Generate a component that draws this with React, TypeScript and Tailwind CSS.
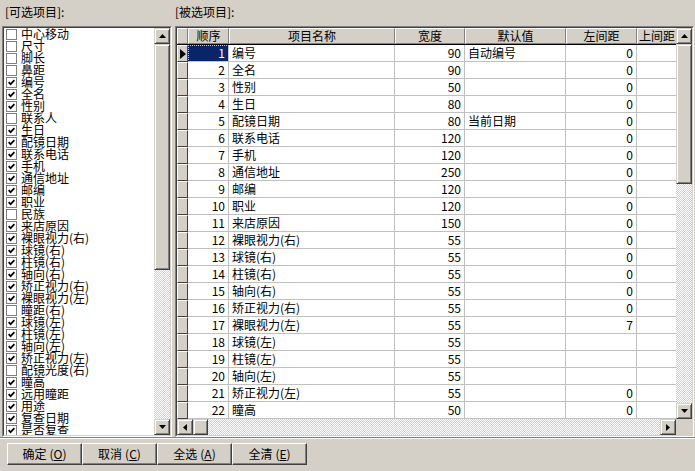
import React from 'react';

const FONT = "font-['Noto_Sans_CJK_SC','Noto_Sans_CJK_JP',sans-serif]";

// classic 3D styles
const raised =
    'bg-[#d4d0c8] border border-t-[#d4d0c8] border-l-[#d4d0c8] border-r-[#404040] border-b-[#404040] shadow-[inset_1px_1px_0_#ffffff,inset_-1px_-1px_0_#808080]';
const track =
    'bg-[repeating-conic-gradient(#d4d0c8_0%_25%,#ffffff_0%_50%)] bg-[length:2px_2px]';

type Dir = 'up' | 'down' | 'left' | 'right';

const Arrow: React.FC<{ dir: Dir }> = ({ dir }) => {
    const vertical = dir === 'up' || dir === 'down';
    const pts = {
        up: '3.5,0 7,4 0,4',
        down: '0,0 7,0 3.5,4',
        left: '4,0 4,7 0,3.5',
        right: '0,0 4,3.5 0,7',
    }[dir];
    return (
        <svg
            width={vertical ? 7 : 4}
            height={vertical ? 4 : 7}
            viewBox={vertical ? '0 0 7 4' : '0 0 4 7'}
        >
            <polygon points={pts} fill="#000" />
        </svg>
    );
};

const ScrollBtn: React.FC<{ dir: Dir }> = ({ dir }) => (
    <div className={`${raised} w-[16px] h-[16px] shrink-0 flex items-center justify-center`}>
        <Arrow dir={dir} />
    </div>
);

const VScroll: React.FC<{ thumb: string }> = ({ thumb }) => (
    <div className="w-[16px] shrink-0 flex flex-col">
        <ScrollBtn dir="up" />
        <div className={`flex-1 flex flex-col ${track}`}>
            <div className={`${raised} w-[16px] ${thumb}`} />
        </div>
        <ScrollBtn dir="down" />
    </div>
);

const HScroll: React.FC = () => (
    <div className="flex-1 h-[16px] flex">
        <ScrollBtn dir="left" />
        <div className={`flex-1 flex ${track}`}>
            <div className={`${raised} h-[16px] w-[15px]`} />
        </div>
        <ScrollBtn dir="right" />
    </div>
);

const items: [string, boolean][] = [
    ['中心移动', false],
    ['尺寸', false],
    ['脚长', false],
    ['鼻距', false],
    ['编号', true],
    ['全名', true],
    ['性别', true],
    ['联系人', false],
    ['生日', true],
    ['配镜日期', true],
    ['联系电话', true],
    ['手机', true],
    ['通信地址', true],
    ['邮编', true],
    ['职业', true],
    ['民族', false],
    ['来店原因', true],
    ['裸眼视力(右)', true],
    ['球镜(右)', true],
    ['柱镜(右)', true],
    ['轴向(右)', true],
    ['矫正视力(右)', true],
    ['裸眼视力(左)', true],
    ['瞳距(右)', false],
    ['球镜(左)', true],
    ['柱镜(左)', true],
    ['轴向(左)', true],
    ['矫正视力(左)', true],
    ['配镜光度(右)', false],
    ['瞳高', true],
    ['远用瞳距', true],
    ['用途', true],
    ['复查日期', true],
    ['是否复查', true],
];

// seq, name, width, default, left margin
const rows: [number, string, number, string, string][] = [
    [1, '编号', 90, '自动编号', '0'],
    [2, '全名', 90, '', '0'],
    [3, '性别', 50, '', '0'],
    [4, '生日', 80, '', '0'],
    [5, '配镜日期', 80, '当前日期', '0'],
    [6, '联系电话', 120, '', '0'],
    [7, '手机', 120, '', '0'],
    [8, '通信地址', 250, '', '0'],
    [9, '邮编', 120, '', '0'],
    [10, '职业', 120, '', '0'],
    [11, '来店原因', 150, '', '0'],
    [12, '裸眼视力(右)', 55, '', '0'],
    [13, '球镜(右)', 55, '', '0'],
    [14, '柱镜(右)', 55, '', '0'],
    [15, '轴向(右)', 55, '', '0'],
    [16, '矫正视力(右)', 55, '', '0'],
    [17, '裸眼视力(左)', 55, '', '7'],
    [18, '球镜(左)', 55, '', ''],
    [19, '柱镜(左)', 55, '', ''],
    [20, '轴向(左)', 55, '', ''],
    [21, '矫正视力(左)', 55, '', '0'],
    [22, '瞳高', 50, '', '0'],
];

const cols = [
    { title: '顺序', w: 'w-[41px]' },
    { title: '项目名称', w: 'w-[166px]' },
    { title: '宽度', w: 'w-[70px]' },
    { title: '默认值', w: 'w-[101px]' },
    { title: '左间距', w: 'w-[71px]' },
    { title: '上间距', w: 'w-[40px]' },
];

const headCell =
    'h-[16px] shrink-0 bg-[#d4d0c8] border border-t-white border-l-white border-r-[#808080] border-b-[#808080] flex items-center justify-center leading-[14px] overflow-hidden whitespace-nowrap';
const cell =
    'h-[17px] shrink-0 border-r border-b border-[#c0c0c0] px-[3px] leading-[16px] overflow-hidden whitespace-nowrap';
const indCell =
    'w-[11px] shrink-0 bg-[#d4d0c8] border border-t-white border-l-white border-r-[#404040] border-b-[#404040] flex items-center justify-center';

const Sunken: React.FC<{ className?: string; children: React.ReactNode }> = ({
    className = '',
    children,
}) => (
    <div className={`border border-t-[#808080] border-l-[#808080] border-r-white border-b-white ${className}`}>
        <div className="h-full border border-t-[#404040] border-l-[#404040] border-r-[#d4d0c8] border-b-[#d4d0c8] flex flex-col">
            {children}
        </div>
    </div>
);

const Button: React.FC<{ label: string; hot: string }> = ({ label, hot }) => (
    <div className="w-[75px] h-[22px] bg-[#d4d0c8] border border-t-white border-l-white border-r-[#404040] border-b-[#404040] shadow-[inset_-1px_-1px_0_#808080] flex items-center justify-center leading-[14px]">
        <span>{label}</span>
        <span className="ml-[3px]">
            (<span className="underline">{hot}</span>)
        </span>
    </div>
);

export default function App() {
    return (
        <div className={`w-[695px] h-[471px] bg-[#d4d0c8] overflow-hidden flex flex-col text-[12px] text-black ${FONT}`}>
            {/* labels */}
            <div className="h-[26px] shrink-0 flex pt-[6px] leading-[12px]">
                <div className="w-[175px] pl-[5px]">[可选项目]:</div>
                <div>[被选项目]:</div>
            </div>

            {/* lists */}
            <div className="h-[411px] shrink-0 flex pl-[2px] gap-[3px]">
                <Sunken className="w-[170px]">
                    <div className="flex-1 flex bg-white min-h-0">
                        <div className="flex-1 overflow-hidden">
                            {items.map(([name, on]) => (
                                <div key={name} className="h-[12px] flex items-center pl-[2px]">
                                    <div className="w-[11px] h-[11px] shrink-0 border border-[#808080] bg-white flex items-center justify-center">
                                        {on && (
                                            <svg width="7" height="7" viewBox="0 0 7 7">
                                                <polyline
                                                    points="0.6,3.2 2.6,5.2 6.4,1.2"
                                                    fill="none"
                                                    stroke="#000"
                                                    strokeWidth="1.7"
                                                />
                                            </svg>
                                        )}
                                    </div>
                                    <span className="ml-[4px] leading-[12px] whitespace-nowrap">{name}</span>
                                </div>
                            ))}
                        </div>
                        <VScroll thumb="h-[226px]" />
                    </div>
                </Sunken>

                <Sunken className="w-[519px]">
                    <div className="flex-1 flex min-h-0">
                        <div className="flex-1 flex flex-col overflow-hidden bg-white">
                            {/* header */}
                            <div className="h-[17px] shrink-0 flex border-b border-black bg-[#d4d0c8]">
                                <div className={`${indCell} h-[16px] border-r-[#808080] border-b-[#808080]`} />
                                {cols.map((c) => (
                                    <div key={c.title} className={`${headCell} ${c.w}`}>
                                        {c.title}
                                    </div>
                                ))}
                            </div>
                            {/* rows */}
                            {rows.map(([seq, name, width, def, left]) => (
                                <div key={seq} className="h-[17px] shrink-0 flex">
                                    <div className={`${indCell} h-[17px]`}>
                                        {seq === 1 && (
                                            <svg width="6" height="10" viewBox="0 0 6 10">
                                                <polygon points="0,0 6,5 0,10" fill="#000" />
                                            </svg>
                                        )}
                                    </div>
                                    <div
                                        className={
                                            seq === 1
                                                ? `${cell} w-[41px] text-right bg-[#0a246a] text-white outline-1 outline-dotted outline-[#c8c8c8] -outline-offset-1`
                                                : `${cell} w-[41px] text-right`
                                        }
                                    >
                                        {seq}
                                    </div>
                                    <div className={`${cell} w-[166px]`}>{name}</div>
                                    <div className={`${cell} w-[70px] text-right`}>{width}</div>
                                    <div className={`${cell} w-[101px]`}>{def}</div>
                                    <div className={`${cell} w-[71px] text-right`}>{left}</div>
                                    <div className={`${cell} w-[40px]`} />
                                </div>
                            ))}
                        </div>
                        <VScroll thumb="h-[140px]" />
                    </div>
                    <div className="h-[16px] shrink-0 flex">
                        <HScroll />
                        <div className="w-[16px] bg-[#d4d0c8]" />
                    </div>
                </Sunken>
            </div>

            {/* buttons */}
            <div className="flex-1 border-t border-[#808080]">
                <div className="h-full border-t border-white pt-[4px] pl-[7px] flex items-start">
                    <Button label="确定" hot="O" />
                    <Button label="取消" hot="C" />
                    <Button label="全选" hot="A" />
                    <Button label="全清" hot="E" />
                </div>
            </div>
        </div>
    );
}
